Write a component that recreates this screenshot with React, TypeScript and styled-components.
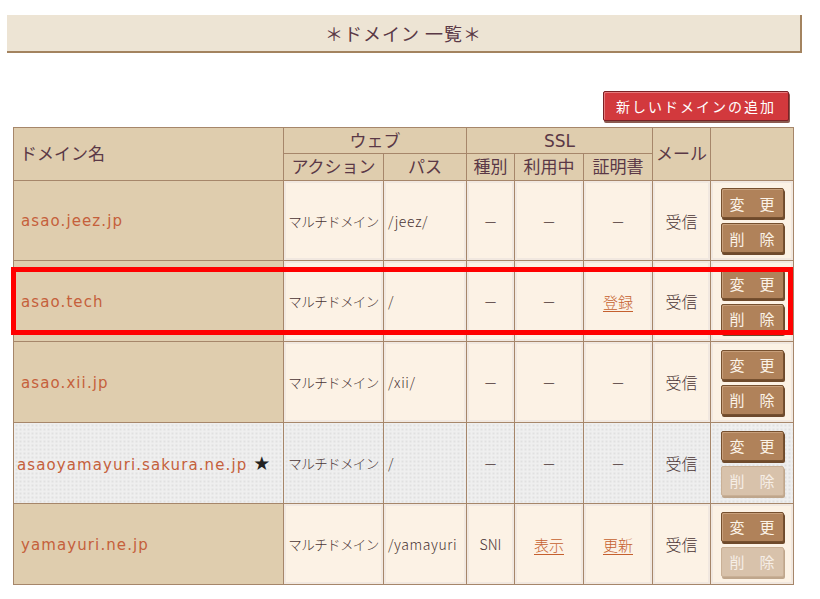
import React from 'react';
import styled, { createGlobalStyle, css } from 'styled-components';

const GlobalStyle = createGlobalStyle`
   body {
      margin: 0;
      background: #ffffff;
      font-family: 'DejaVu Sans', 'Noto Sans CJK JP', sans-serif;
      color: #4a3434;
   }
`;

interface IDomain {
   name: string;
   star?: boolean;
   shared?: boolean;
   path: string;
   sslType: string;
   sslUse: string;
   cert: string;
   canDelete: boolean;
}

const domains: IDomain[] = [
   { name: 'asao.jeez.jp', path: '/jeez/', sslType: '', sslUse: '', cert: '', canDelete: true },
   { name: 'asao.tech', path: '/', sslType: '', sslUse: '', cert: '登録', canDelete: true },
   { name: 'asao.xii.jp', path: '/xii/', sslType: '', sslUse: '', cert: '', canDelete: true },
   { name: 'asaoyamayuri.sakura.ne.jp', star: true, shared: true, path: '/', sslType: '', sslUse: '', cert: '', canDelete: false },
   { name: 'yamayuri.ne.jp', path: '/yamayuri', sslType: 'SNI', sslUse: '表示', cert: '更新', canDelete: false },
];

const colWidths = [270, 100, 83, 48, 69, 69, 58, 83];

function Value({ text }: { text: string }) {
   if (!text) return <Dash>－</Dash>;
   if (text === 'SNI') return <Plain>{text}</Plain>;
   return <LinkText>{text}</LinkText>;
}

export default function App() {
   return (
      <Page>
         <GlobalStyle />
         <TitleBar>＊ドメイン 一覧＊</TitleBar>
         <Toolbar>
            <AddButton>新しいドメインの追加</AddButton>
         </Toolbar>
         <TableWrap>
            <Table>
               <colgroup>
                  {colWidths.map((w, i) => (
                     <col key={i} style={{ width: w }} />
                  ))}
               </colgroup>
               <thead>
                  <HeadRow>
                     <HeadCell rowSpan={2} $align="left">
                        ドメイン名
                     </HeadCell>
                     <HeadCell colSpan={2}>ウェブ</HeadCell>
                     <HeadCell colSpan={3}>SSL</HeadCell>
                     <HeadCell rowSpan={2}>メール</HeadCell>
                     <HeadCell rowSpan={2} />
                  </HeadRow>
                  <HeadRow $second>
                     <HeadCell>アクション</HeadCell>
                     <HeadCell>パス</HeadCell>
                     <HeadCell>種別</HeadCell>
                     <HeadCell>利用中</HeadCell>
                     <HeadCell>証明書</HeadCell>
                  </HeadRow>
               </thead>
               <tbody>
                  {domains.map((d, i) => (
                     <BodyRow key={d.name} $first={i === 0}>
                        <NameCell $shared={d.shared}>
                           <DomainName>{d.name}</DomainName>
                           {d.star && <Star>★</Star>}
                        </NameCell>
                        <DataCell $shared={d.shared}>
                           <Action>マルチドメイン</Action>
                        </DataCell>
                        <DataCell $shared={d.shared} $align="left">
                           <PathText>{d.path}</PathText>
                        </DataCell>
                        <DataCell $shared={d.shared}>
                           <Value text={d.sslType} />
                        </DataCell>
                        <DataCell $shared={d.shared}>
                           <Value text={d.sslUse} />
                        </DataCell>
                        <DataCell $shared={d.shared}>
                           <Value text={d.cert} />
                        </DataCell>
                        <DataCell $shared={d.shared}>
                           <Mail>受信</Mail>
                        </DataCell>
                        <DataCell $shared={d.shared}>
                           <ButtonStack>
                              <ActionButton>変　更</ActionButton>
                              <ActionButton $disabled={!d.canDelete}>削　除</ActionButton>
                           </ButtonStack>
                        </DataCell>
                     </BodyRow>
                  ))}
               </tbody>
            </Table>
            <Highlight />
         </TableWrap>
      </Page>
   );
}

const Page = styled.div`
   width: 795px;
   padding: 15px 0 0 7px;
`;

const TitleBar = styled.div`
   height: 36px;
   background: #ede4d4;
   border-bottom: 2px solid #a3835f;
   border-right: 2px solid #a3835f;
   display: flex;
   align-items: center;
   justify-content: center;
   font-family: 'Noto Sans CJK JP', sans-serif;
   font-size: 18px;
   letter-spacing: 1px;
   color: #5a3846;
`;

const Toolbar = styled.div`
   display: flex;
   justify-content: flex-end;
   padding: 38px 13px 0 0;
   margin-bottom: 6px;
`;

const AddButton = styled.button`
   width: 186px;
   height: 30px;
   background: #d2393d;
   border: 1px solid #7a2226;
   border-radius: 2px;
   box-shadow: inset 1px 1px 0 #e57a7c, 1px 2px 0 #8a5a50;
   color: #ffffff;
   font-family: 'Noto Sans CJK JP', sans-serif;
   font-size: 14px;
   letter-spacing: 2px;
   padding: 0;
   cursor: pointer;
`;

const TableWrap = styled.div`
   position: relative;
   margin-left: 6px;
   width: 781px;
`;

const Table = styled.table`
   width: 781px;
   table-layout: fixed;
   border-collapse: collapse;
   border: 1px solid #a6866a;
`;

const HeadRow = styled.tr<{ $second?: boolean }>`
   height: ${(p) => (p.$second ? 27 : 26)}px;
`;

const HeadCell = styled.th<{ $align?: string }>`
   background: #dfcdae;
   border: 1px solid #a6866a;
   padding: 0 ${(p) => (p.$align === 'left' ? '6px' : '0')};
   text-align: ${(p) => p.$align ?? 'center'};
   font-family: 'DejaVu Sans', 'Noto Sans CJK JP', sans-serif;
   font-weight: normal;
   font-size: 17px;
   line-height: 20px;
   color: #5a3846;
   white-space: nowrap;
`;

const BodyRow = styled.tr<{ $first?: boolean }>`
   height: ${(p) => (p.$first ? 80 : 81)}px;
`;

const sharedBg = css`
   background-color: #efefef;
   background-image: radial-gradient(#e0e0e0 0.8px, transparent 1px);
   background-size: 4px 4px;
`;

const NameCell = styled.td<{ $shared?: boolean }>`
   border: 1px solid #a6866a;
   padding: 0 ${(p) => (p.$shared ? '3px' : '7px')};
   background: #dfcdae;
   ${(p) => p.$shared && sharedBg}
   white-space: nowrap;
   vertical-align: middle;
`;

const DomainName = styled.span`
   font-family: 'DejaVu Sans', sans-serif;
   font-size: 15px;
   letter-spacing: 1.1px;
   color: #c5603b;
`;

const Star = styled.span`
   margin-left: 6px;
   font-family: 'DejaVu Sans', sans-serif;
   font-size: 19px;
   color: #222222;
`;

const DataCell = styled.td<{ $shared?: boolean; $align?: string }>`
   border: 1px solid #a6866a;
   background: #fcf2e5;
   box-shadow: inset 0 0 0 2px #f1e8e0;
   ${(p) => p.$shared && sharedBg}
   ${(p) => p.$shared && 'box-shadow: none;'}
   padding: 0 ${(p) => (p.$align === 'left' ? '4px' : '0')};
   text-align: ${(p) => p.$align ?? 'center'};
   vertical-align: middle;
   white-space: nowrap;
   overflow: hidden;
`;

const lightText = css`
   font-family: 'Noto Sans CJK JP', sans-serif;
   font-weight: 300;
   color: #4a3434;
`;

const Action = styled.span`
   ${lightText}
   font-size: 13.5px;
   letter-spacing: -0.6px;
`;

const PathText = styled.span`
   ${lightText}
   font-size: 14px;
   letter-spacing: 0.6px;
`;

const Dash = styled.span`
   ${lightText}
   font-size: 14px;
`;

const Plain = styled.span`
   ${lightText}
   font-size: 14px;
`;

const LinkText = styled.span`
   ${lightText}
   font-size: 15px;
   color: #c5602e;
   text-decoration: underline;
   text-underline-offset: 3px;
   cursor: pointer;
`;

const Mail = styled.span`
   ${lightText}
   font-size: 16px;
`;

const ButtonStack = styled.div`
   display: flex;
   flex-direction: column;
   align-items: center;
   gap: 5px;
`;

const ActionButton = styled.button<{ $disabled?: boolean }>`
   width: 63px;
   height: 30px;
   padding: 0;
   border-radius: 2px;
   font-family: 'Noto Sans CJK JP', sans-serif;
   font-size: 15px;
   line-height: 1;
   cursor: pointer;
   ${(p) =>
      p.$disabled
         ? css`
              background: #d8c2ab;
              border: 1px solid #c9b096;
              box-shadow: 1px 2px 0 #bfa68c;
              color: #f6eee6;
           `
         : css`
              background: #b0825a;
              border: 1px solid #76502f;
              box-shadow: inset 1px 1px 0 #c8a07c, 1px 2px 0 #6e4a2c;
              color: #fbf3e8;
           `}
`;

const Highlight = styled.div`
   position: absolute;
   left: -2px;
   top: 140px;
   width: 772px;
   height: 58px;
   border: 5px solid #ff0000;
   pointer-events: none;
`;
